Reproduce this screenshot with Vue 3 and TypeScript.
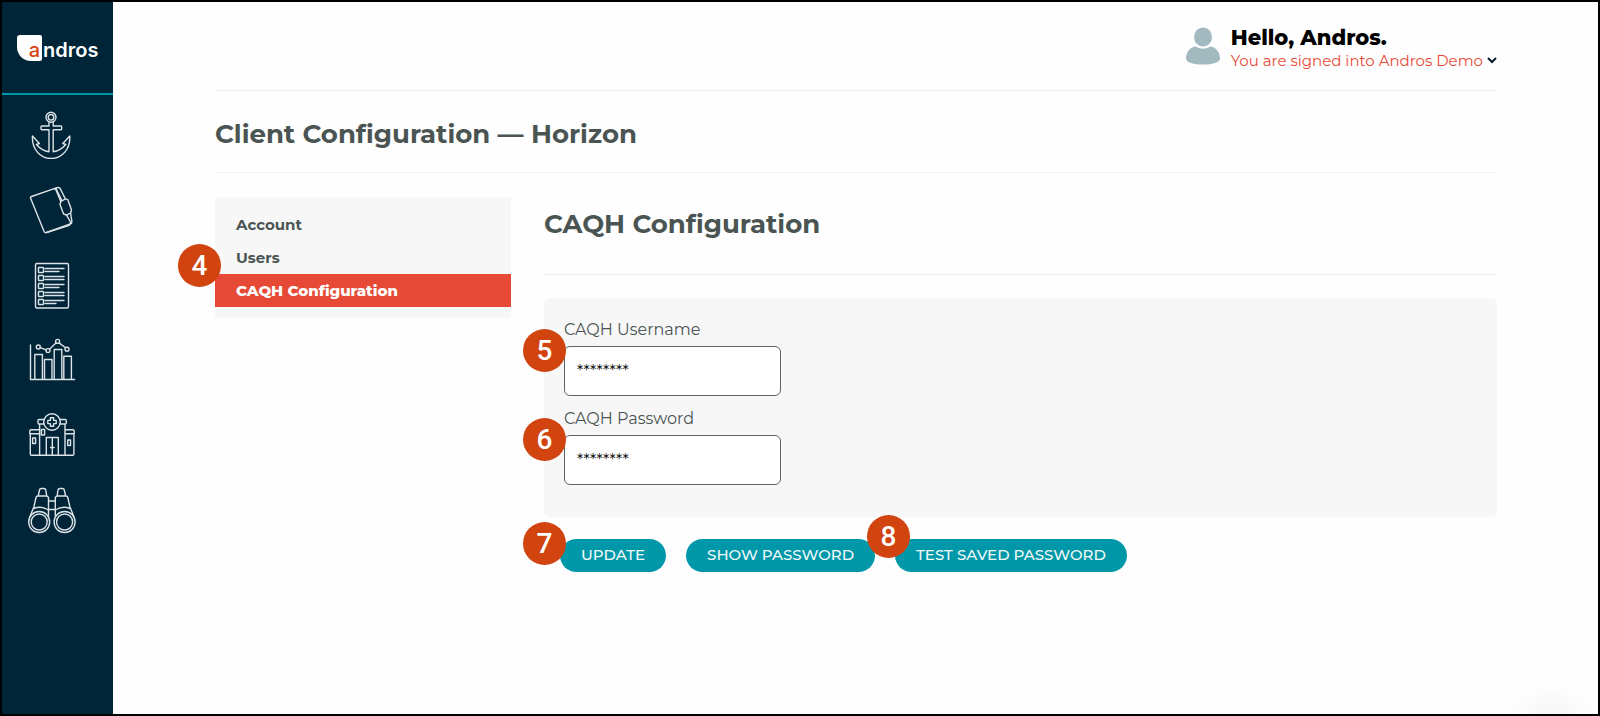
<script setup lang="ts">
import { ref } from 'vue'

interface NavItem {
  label: string
  active?: boolean
  step?: number
}

const navItems: NavItem[] = [
  { label: 'Account' },
  { label: 'Users' },
  { label: 'CAQH Configuration', active: true, step: 4 },
]

const checklistRows = [
  { y: 9, end: 31 },
  { y: 17, end: 36 },
  { y: 25, end: 31 },
  { y: 33, end: 36 },
  { y: 41, end: 28 },
]

const username = ref('********')
const password = ref('********')
</script>

<template>
  <div class="app">
    <aside class="sidebar">
      <a class="logo" href="#" aria-label="andros"><span class="logo-mark">a</span><span class="logo-word">ndros</span></a>
      <nav class="rail" aria-label="Main">
        <a href="#" aria-label="Home">
          <svg viewBox="0 0 48 48">
            <circle cx="23" cy="6.3" r="5" />
            <circle cx="23" cy="6.3" r="2.8" />
            <path d="M21 11v4h-7.200q-.8 0-.8.8v2q0 .9.8.9H21v22c-5-.6-9-3-12.600-7.200l3-1-7-7.500c-.6 13 7.600 22.500 18.700 22.500s19.300-9.500 18.700-22.500l-7 7.500 3 1c-3.600 4.200-7.600 6.600-12.600 7.200v-22h7.700q.8 0 .8-.9v-2q0-.8-.8-.8H25.200v-4" />
          </svg>
        </a>
        <a href="#" aria-label="Files">
          <svg viewBox="0 0 48 48">
            <path d="M3.500 10.500 25.500 2.800q1.800-.5 2.500 1.200l4.800 11.500-.8 3 3.600 9.500 3 1.200L42.500 36q.5 1.600-1 2.200L18.500 46.500q-1.700.5-2.400-1L2.600 12.300q-.5-1.300.9-1.800Z" />
            <path d="m26 2.600 3.800-1.100q1.700-.3 2.500 1.200l5 10.200M32.800 15.500l4.700-2.600 2.300.8 3.700 10-.9 3.300-4 2.200M42.600 27l1.300 8.500q.1 2-1.700 2.500M18.500 46.500l23-7.200M28 2.600l5.800 12" />
          </svg>
        </a>
        <a href="#" aria-label="Rosters">
          <svg viewBox="0 0 48 48">
            <rect x="7.500" y="2.500" width="33" height="44.500" rx="1.500" />
            <g v-for="row in checklistRows" :key="row.y">
              <rect x="10.500" :y="row.y - 2.500" width="5" height="5" rx=".5" />
              <path :d="`M17 ${row.y - 1.500}H36M17 ${row.y + 1.500}H${row.end}`" />
            </g>
          </svg>
        </a>
        <a href="#" aria-label="Reports">
          <svg viewBox="0 0 48 48">
            <path d="M2.500 9v34.500H46.500M6.800 43.500V18.500h7.600v25M16.500 43.500V23.500H24v20M26.200 43.500V13.500h7.600v25.500v4.500M35.800 43.500V20.200h7.600v23.300" />
            <circle cx="10.300" cy="11" r="2" />
            <circle cx="20" cy="14.600" r="2" />
            <circle cx="29.600" cy="5.400" r="2" />
            <circle cx="39" cy="13.300" r="2" />
            <path d="m12.200 11.700 5.900 2.200M21.500 13.200l6.700-6.400M31 6.900l6.600 4.900" />
          </svg>
        </a>
        <a href="#" aria-label="Facilities">
          <svg viewBox="0 0 48 48">
            <circle cx="24" cy="11" r="8.300" />
            <path d="M22.400 6.800h3.200v2.600h2.600v3.200h-2.600v2.600h-3.200v-2.600h-2.600V9.400h2.600zM16 8.500h-5q-1 0-1 1V12q0 1 1 1h5M32 8.500h5.300q1 0 1 1V12q0 1-1 1H32M11.600 13v31M37 13v31M11 18.700H3q-1.200 0-1.200 1.200v2.800H11M37 18.700h8q1.200 0 1.200 1.200v2.800H37M2.300 22.700V43q0 1.200 1.200 1.200h41.200q1.200 0 1.200-1.200V22.700M18.300 44V26.500h12V44M24.300 26.500V44M22.500 36.500h3.600M4.600 27h3v5.500h-3zM13.400 18.500h3.200V24h-3.200zM39.700 29h2.800v5.500h-2.800z" />
          </svg>
        </a>
        <a href="#" aria-label="Search">
          <svg viewBox="0 0 48 48">
            <circle cx="11.200" cy="36" r="10.500" />
            <circle cx="11.200" cy="36" r="8" />
            <circle cx="36.600" cy="36" r="10.500" />
            <circle cx="36.600" cy="36" r="8" />
            <path d="M2 30.500 6 20.500 8 11.500q.4-1.500 2-1.500h8.200q1.800 0 2.300 1.800V30M10.200 10l1.300-6q.3-1.500 1.800-1.500H16q1.500 0 1.800 1.500L18.700 10M45.800 30.500l-4-10-2-9q-.4-1.500-2-1.500h-8.200q-1.800 0-2.300 1.800V30M37.600 10l-1.300-6q-.3-1.500-1.800-1.500h-2.700q-1.500 0-1.800 1.500L29.100 10M20.500 15h6.800M20.500 23.500h6.800M5.800 22.500q7.500-3.200 14.500 1.500M42 22.500q-7.500-3.200-14.500 1.500" />
          </svg>
        </a>
      </nav>
    </aside>

    <main class="main">
      <header class="topbar">
        <svg class="avatar" viewBox="0 0 34 38" aria-hidden="true">
          <ellipse cx="17" cy="10" rx="9" ry="9.500" />
          <path d="M9.500 19.500q7.500 4.500 15 0C30 20 34 25.500 34 31.500 34 35.500 26 37.500 17 37.500S0 35.500 0 31.500C0 25.500 4 20 9.500 19.500Z" />
        </svg>
        <div class="greeting">
          <strong>Hello, Andros.</strong>
          <button class="tenant" type="button">
            <span>You are signed into Andros Demo</span>
            <svg viewBox="0 0 10 8" aria-hidden="true"><path d="m1 2 4 4 4-4" /></svg>
          </button>
        </div>
      </header>

      <h1 class="page-title">Client Configuration — Horizon</h1>

      <div class="columns">
        <nav class="side-nav" aria-label="Configuration">
          <a v-for="item in navItems" :key="item.label" href="#" :class="{ active: item.active }">
            {{ item.label }}
            <span v-if="item.step" class="step step-nav">{{ item.step }}</span>
          </a>
        </nav>

        <form class="config" @submit.prevent>
          <h2>CAQH Configuration</h2>
          <div class="panel">
            <div class="field">
              <label for="caqh-username">CAQH Username</label>
              <div class="anchor">
                <input id="caqh-username" v-model="username" type="text" />
                <span class="step step-field">5</span>
              </div>
            </div>
            <div class="field">
              <label for="caqh-password">CAQH Password</label>
              <div class="anchor">
                <input id="caqh-password" v-model="password" type="text" />
                <span class="step step-field">6</span>
              </div>
            </div>
          </div>
          <div class="actions">
            <div class="anchor">
              <button class="pill" type="submit">UPDATE</button>
              <span class="step step-update">7</span>
            </div>
            <button class="pill" type="button">SHOW PASSWORD</button>
            <div class="anchor">
              <button class="pill" type="button">TEST SAVED PASSWORD</button>
              <span class="step step-test">8</span>
            </div>
          </div>
        </form>
      </div>
    </main>
  </div>
</template>

<style>
body {
  margin: 0;
}
</style>

<style scoped>
.app,
.app * {
  box-sizing: border-box;
}

.app {
  display: flex;
  min-height: 100vh;
  border: 2px solid #000;
  background: radial-gradient(ellipse 50px 28px at calc(100% - 46px) 100%, #f6f6f6, #fefefe);
  color: #4a5553;
  font-family: Montserrat, Inter, "Open Sans", sans-serif;
  font-size: 16px;
}

a {
  color: inherit;
  text-decoration: none;
}

button,
input {
  font: inherit;
}

.sidebar {
  flex: 0 0 111px;
  background: #002539;
}

.logo {
  display: flex;
  align-items: center;
  height: 93px;
  padding-left: 15px;
  border-bottom: 2px solid #0098a8;
  color: #fff;
  font-family: Inter, "Liberation Sans", sans-serif;
  font-size: 20px;
  font-weight: 600;
  line-height: 26px;
}

.logo-mark {
  width: 25px;
  height: 26px;
  padding-right: 2px;
  border-radius: 3px 2px 2px 14px;
  background: #fff;
  color: #d9430f;
  font-weight: 500;
  line-height: 30px;
  text-align: right;
}

.logo-word {
  padding: 4px 0 0 1px;
}

.rail {
  display: flex;
  flex-direction: column;
  gap: 27px;
  padding: 16px 0 0 26px;
}

.rail a,
.rail svg {
  display: block;
  width: 48px;
  height: 48px;
}

.rail svg {
  fill: none;
  stroke: #dce3e6;
  stroke-width: 1.4;
  stroke-linejoin: round;
  stroke-linecap: round;
}

.main {
  flex: 1;
  min-width: 0;
  padding: 0 101px 40px 102px;
}

.topbar {
  display: flex;
  justify-content: flex-end;
  align-items: center;
  gap: 11px;
  height: 89px;
  border-bottom: 1px solid #e8efef;
}

.avatar {
  width: 34px;
  height: 38px;
  fill: #a3b9c0;
}

.greeting {
  padding-top: 4px;
}

.greeting strong {
  display: block;
  color: #000;
  font-size: 21px;
  font-weight: 800;
  line-height: 24px;
}

.tenant {
  display: flex;
  align-items: center;
  gap: 4px;
  padding: 0;
  border: 0;
  background: none;
  color: #e84a37;
  font-size: 15px;
  line-height: 21px;
  cursor: pointer;
}

.tenant svg {
  width: 10px;
  height: 8px;
  fill: none;
  stroke: #0b1a2b;
  stroke-width: 2;
}

h1,
h2 {
  margin: 0;
  font-size: 26px;
  font-weight: 700;
  line-height: 32px;
}

.page-title {
  padding: 27px 0 22px;
  border-bottom: 1px solid #f3f5f5;
}

.columns {
  display: flex;
  align-items: flex-start;
  gap: 33px;
  padding-top: 24px;
}

.side-nav {
  flex: 0 0 296px;
  padding: 11px 0;
  background: #f7f7f7;
  font-size: 15px;
  font-weight: 700;
  line-height: 33px;
}

.side-nav a {
  display: block;
  position: relative;
  height: 33px;
  padding-left: 21px;
}

.side-nav .active {
  background: #e64a37;
  color: #fff;
  font-weight: 800;
}

.config {
  flex: 1;
  min-width: 0;
}

h2 {
  padding: 11px 0 34px;
  border-bottom: 1px solid #e8efef;
}

.panel {
  display: flex;
  flex-direction: column;
  gap: 10px;
  margin-top: 23px;
  padding: 19px 20px 32px;
  border-radius: 6px;
  background: #f7f7f7;
}

.field label {
  display: block;
  padding-bottom: 4px;
  line-height: 25px;
}

.anchor {
  position: relative;
  width: fit-content;
}

input {
  display: block;
  width: 217px;
  height: 50px;
  padding: 0 12px;
  border: 1px solid #5a6664;
  border-radius: 6px;
  background: #fff;
  color: #111;
  font-size: 16px;
}

.actions {
  display: flex;
  flex-wrap: wrap;
  gap: 20px;
  padding: 22px 0 0 16px;
}

.pill {
  display: block;
  height: 33px;
  padding: 0 21px 1px;
  border: 0;
  border-radius: 17px;
  background: #0098a8;
  color: #f2fafa;
  font-size: 15px;
  font-weight: 500;
  line-height: 32px;
  cursor: pointer;
}

.step {
  position: absolute;
  z-index: 1;
  width: 43px;
  height: 43px;
  border-radius: 50%;
  background: #d1430f;
  color: #fff;
  font-family: Roboto, "Liberation Sans", Arial, sans-serif;
  font-size: 28px;
  font-weight: 500;
  line-height: 44px;
  text-align: center;
}

.step-nav {
  top: -30px;
  left: -37px;
}

.step-field {
  top: -17px;
  left: -41px;
}

.step-update {
  top: -17px;
  left: -37px;
}

.step-test {
  top: -24px;
  left: -28px;
}
</style>
